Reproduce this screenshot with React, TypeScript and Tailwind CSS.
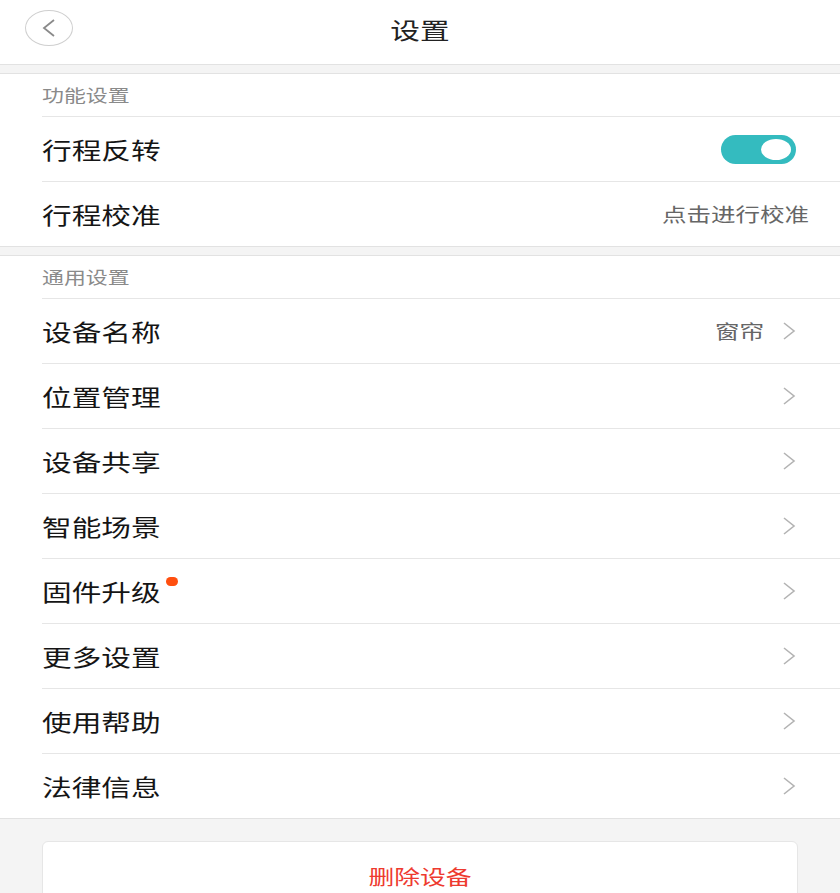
import React from "react";

const font = { fontFamily: '"Noto Sans CJK SC", "Noto Sans", sans-serif' };

function Wide({ children, className = "" }: { children: React.ReactNode; className?: string }) {
  return <span className={`inline-block scale-x-[1.29] ${className}`}>{children}</span>;
}

function Chevron() {
  return (
    <svg width="14" height="20" viewBox="0 0 14 20" className="shrink-0">
      <polyline points="2,2 12,10 2,18" fill="none" stroke="#b3b3b3" strokeWidth="1.6" />
    </svg>
  );
}

function Gap() {
  return <div className="h-[10px] bg-[#f4f4f4] border-y border-[#e2e2e2]" />;
}

function SectionTitle({ title }: { title: string }) {
  return (
    <div className="h-[42px] flex items-center pl-[42px] text-[17px] text-[#8a8a8a]">
      <Wide className="origin-left">{title}</Wide>
    </div>
  );
}

function Row({
  label,
  value,
  dot,
  last,
  children,
}: {
  label: string;
  value?: string;
  dot?: boolean;
  last?: boolean;
  children?: React.ReactNode;
}) {
  return (
    <div className={last ? "border-b border-[#e2e2e2]" : ""}>
      <div className="ml-[42px] h-[65px] flex items-center justify-between pr-[44px] border-t border-[#e6e6e6]">
        <div className="relative flex items-center">
          <Wide className="origin-left text-[23px] text-[#151515]">{label}</Wide>
          {dot && (
            <span className="absolute left-[124px] top-[3px] w-[12px] h-[9px] rounded-full bg-[#ff4f0f]" />
          )}
        </div>
        {children ?? (
          <div className="flex items-center gap-[18px]">
            {value && <Wide className="origin-right text-[19px] text-[#666]">{value}</Wide>}
            <Chevron />
          </div>
        )}
      </div>
    </div>
  );
}

export default function App() {
  const general = ["位置管理", "设备共享", "智能场景", "固件升级", "更多设置", "使用帮助"];
  return (
    <div className="w-[840px] h-[893px] overflow-hidden bg-[#f4f4f4]" style={font}>
      <header className="h-[64px] bg-white relative flex items-center justify-center">
        <button className="absolute left-[25px] top-[10px] w-[48px] h-[36px] rounded-[50%] border border-[#cfcfcf] flex items-center justify-center">
          <svg width="16" height="20" viewBox="0 0 16 20">
            <polyline points="13,2 3,10 13,18" fill="none" stroke="#8a8a8a" strokeWidth="1.8" />
          </svg>
        </button>
        <Wide className="origin-center text-[23px] text-[#222] mb-[6px]">设置</Wide>
      </header>
      <Gap />
      <section className="bg-white">
        <SectionTitle title="功能设置" />
        <Row label="行程反转">
          <div className="w-[75px] h-[29px] rounded-full bg-[#34bbbf] flex items-center justify-end pr-[5px]">
            <span className="w-[30px] h-[21px] rounded-[50%] bg-white" />
          </div>
        </Row>
        <Row label="行程校准">
          <Wide className="origin-right text-[19px] text-[#666] mr-[-13px]">点击进行校准</Wide>
        </Row>
      </section>
      <Gap />
      <section className="bg-white">
        <SectionTitle title="通用设置" />
        <Row label="设备名称" value="窗帘" />
        {general.map((g) => (
          <Row key={g} label={g} dot={g === "固件升级"} />
        ))}
        <Row label="法律信息" last />
      </section>
      <div className="px-[42px] pt-[22px]">
        <div className="h-[70px] bg-white rounded-[6px] border border-[#e6e6e6] flex items-start justify-center pt-[21px]">
          <Wide className="origin-center text-[20px] leading-[28px] text-[#ee3a2f]">删除设备</Wide>
        </div>
      </div>
    </div>
  );
}
